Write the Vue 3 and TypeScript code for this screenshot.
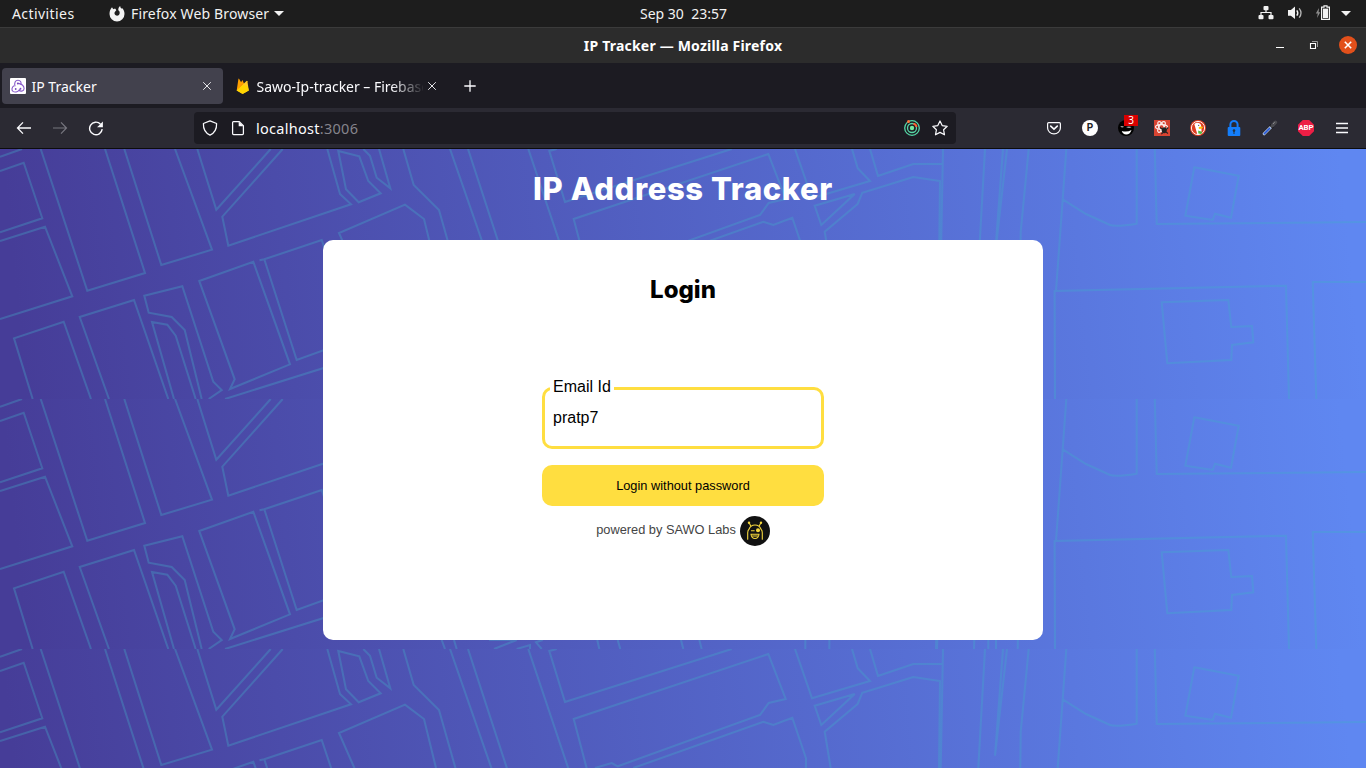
<script setup lang="ts">
import { ref } from 'vue'

const email = ref<string>('pratp7')

const tileHeight = 250
const tiles = [0, 1, 2]

// Street outlines of one background map tile (1366 x 250)
const streets: string[] = [
  'M0 7.7L22 0',
  'M0 22L23.7 13.7 42.3 69.3 0 83.3',
  'M0 92L45 77.7 72.3 147.3 0 170',
  'M40.7 0L87.3 141.7 145 124 105 0',
  'M124.3 0L161.3 116 212 100.7 175 0',
  'M197.3 0L216.3 60.7 270.7 0',
  'M282.7 0L222.3 67.7 228.3 96.7 351 55.3 340 45 327.3 0',
  'M32.7 250L14 189.3 63.7 172.7 91 250',
  'M109 250L79.7 168 134 151 168.3 250',
  'M201.7 250L184.7 181 171.7 168 148.7 163.7 144.3 146.7 182.3 137.3 213.3 232.7 221.7 241 208.7 250',
  'M174 250L152 173 167.3 175.7 175.7 186.7 195.7 250',
  'M199.3 132L253.3 112.7 290 215.3 230 240 234.7 230.3Z',
  'M259.5 111.3L264.3 110.3 321.7 91 355 190 296.7 211 264.3 110.3',
  'M225 250L365 206',
  'M338.3 2L359.3 7.3 368.3 32 380.7 44.3 358.7 53.3 346 40.3Z',
  'M363.3 0L370 6.7 376.7 28.7 390.3 39.3 379 0',
  'M403.3 0L413.7 36 439 61 490 241 516.7 241',
  'M390 200L339 84 405 55.7 424 70 436 119 460 200',
  'M450 0L530 230', 'M468 0L530 190', 'M528.3 0L597 205',
  'M556.7 0L549.3 2 565 53 731.7 0',
  'M600 170L573.7 70 768.3 5 785.7 50 768.7 54 760 66 617.7 117.3 611.7 114 595 119',
  'M633.3 119L763.3 72.7 773.3 76 792.3 68.7 806 109.3 805.3 250',
  'M795 0L812 49.3 870 32 857.7 19.3 852 0',
  'M870 0L878 27 913.3 15 941.7 15',
  'M943 0L940.7 119 937 250',
  'M829.3 250L830.7 119 824.7 82.7 857.7 55 862.3 43.7 913.3 28 940 32 939 119 936 250',
  'M814.7 56.7L854.7 45 821.3 76Z',
  'M985 0L978.3 119 974 250',
  'M1003 0L995 106.7 1007 0',
  'M1028.7 0L1020.7 82.7 1020.3 119 1017.7 250',
  'M988.3 250V236', 'M996 250V236',
  'M441.7 241L445 250', 'M454 241L456.7 250', 'M494 250L516.7 241',
  'M516.7 250L530 246V250', 'M541.7 250L536 243.3 542.7 241',
  'M597.3 241L599.3 250', 'M617.7 241L620.3 250', 'M681 241L683.3 250', 'M699.3 241L701.7 250',
  'M1066.3 0L1062.7 50.3 1056 142',
  'M1062.7 50.3L1086 65 1110 76Q1116 78 1136.7 74.7V0',
  'M1154.8 0L1156.7 75 1366 73',
  'M1194.3 18.3L1238.7 26.7 1231 68.7 1215 64.7 1212.7 71 1185.3 66.7Z',
  'M1055 250L1054.6 142 1286 136.7 1289 250',
  'M1316.3 250L1312.7 133H1366',
  'M1161.7 153.3L1228.3 151 1231.3 178 1252 177 1253.3 193.3 1232 196 1231.3 211 1167.3 214.3Z',
]
</script>

<template>
  <div class="desktop">
    <header class="topbar">
      <span class="activities">Activities</span>
      <span class="app-menu">
        <svg width="16" height="16" viewBox="0 0 16 16">
          <path fill="#f2f2f2" d="M3 1.2 4.3 3.3C5 2.8 5.8 2.7 6.4 2.8L7.3 4.2 6.2 5.4C4.9 6.7 5.4 8.8 7.1 9.5 8.9 10.1 10.7 8.8 10.7 7 10.7 5.7 10.2 4.9 9.3 4.3 9.1 2.4 9.9 1 11.2 0 11.2 1.7 12.1 2.2 12.8 2.7L13 1.9C14.8 3.6 15.5 5.5 15.5 8A7.5 7.5 0 1 1 .5 8C.5 5.3 1.3 3 3 1.2Z" />
        </svg>
        <span class="app-name">Firefox Web Browser</span>
        <svg class="caret" width="10" height="5" viewBox="0 0 10 5"><path fill="#f2f2f2" d="M0 0h10L5 5z" /></svg>
      </span>
      <span class="clock">Sep 30&nbsp; 23:57</span>
      <span class="status">
        <svg class="network" width="16" height="16" viewBox="0 0 16 16">
          <g fill="#f2f2f2"><rect x="5.5" y="1" width="5" height="4.2" rx="1" /><rect x=".5" y="10" width="5" height="4.2" rx="1" /><rect x="10.5" y="10" width="5" height="4.2" rx="1" /></g>
          <path d="M8 4v3.5M3 11V7.5h10V11" fill="none" stroke="#f2f2f2" stroke-width="1.2" />
        </svg>
        <svg class="volume" width="16" height="16" viewBox="0 0 16 16">
          <path fill="#f2f2f2" d="M1 5h2.9L8 1.5v12.6l-4.1-3.4H1z" />
          <path d="M9.8 5.3q2 2.7 0 5.4" fill="none" stroke="#f2f2f2" stroke-width="1.4" />
          <path d="M12.2 3.3q3.6 4.6 0 9.4" fill="none" stroke="#b8b8b8" stroke-width="1.3" />
        </svg>
        <svg class="battery" width="16" height="16" viewBox="0 0 16 16">
          <path fill="#8e8e8e" d="M4 3 .8 8.6h2L2 13l3.3-5.8H3.6z" />
          <path d="M6.6 2.1H9V.8h3v1.3h2.4v12.3H6.6z" fill="none" stroke="#f2f2f2" stroke-width="1.2" />
          <path fill="#f2f2f2" d="M8 3.6h5v9.4H8z" />
        </svg>
        <svg class="menu-caret" width="10" height="5" viewBox="0 0 10 5"><path fill="#f2f2f2" d="M0 0h10L5 5z" /></svg>
      </span>
    </header>

    <div class="titlebar">
      <span class="window-title">IP Tracker — Mozilla Firefox</span>
      <div class="window-buttons">
        <svg width="16" height="18" viewBox="0 0 16 18"><path fill="#fff" d="M4 11h8v1H4z" /></svg>
        <svg width="16" height="18" viewBox="0 0 16 18">
          <path d="M4.5 7.5h5v5h-5z" fill="none" stroke="#fff" stroke-width="1.1" /><path d="M6 5.5h5.5v5.5" fill="none" stroke="#999" />
        </svg>
        <svg width="18" height="18" viewBox="0 0 18 18">
          <circle cx="9" cy="9" r="9" fill="#e2501b" /><path d="m5.8 5.8 6.4 6.4m0-6.4-6.4 6.4" stroke="#fff" stroke-width="1.6" />
        </svg>
      </div>
    </div>

    <div class="tabs">
      <div class="tab active">
        <svg width="16" height="16" viewBox="0 0 16 16">
          <rect width="16" height="16" rx="1" fill="#fff" />
          <g fill="none" stroke="#8759c9" stroke-width="1.1">
            <path d="M5 8.3C4.1 5 5.2 2.2 8 2.2c2.6 0 3.8 2.4 2.7 4.6" />
            <path d="M7.9 5.4c3.6.1 6.2 2.5 6.2 5-.1 2.6-3 3.6-5.6 1.6" />
            <path d="M10.5 10.7c-1.9 3.1-5.2 4.1-7.5 2.7-1.8-1.4-1.2-4.2.9-5.6" />
          </g>
          <circle cx="5.7" cy="11" r=".9" fill="#764abc" /><circle cx="7.8" cy="5.5" r=".9" fill="#764abc" /><circle cx="10.5" cy="10.7" r=".9" fill="#764abc" />
        </svg>
        <span class="tab-label">IP Tracker</span>
        <svg class="tab-close" width="10" height="10" viewBox="0 0 10 10"><path d="m1.2 1.2 7.6 7.6m0-7.6-7.6 7.6" stroke="#e4e4e8" /></svg>
      </div>
      <div class="tab second">
        <svg width="16" height="16" viewBox="0 0 16 16">
          <path fill="#ffa000" d="M1.7 12.5 3.4.9q.3-.7.8 0L6.1 4.2 7.5 2l4 10z" />
          <path fill="#f57c00" d="M1.7 12.5 7.3 6 9 8.8z" />
          <path fill="#ffca28" d="M1.7 12.6 11.5 3q.7-.5.9.3l1.4 9.2-5.4 3.1q-.8.4-1.5 0z" />
          <path fill="#ffd400" d="m1.7 12.6 6-5.8 5 1.6 1.1 4.1-5.4 3.1q-.8.4-1.5 0z" />
        </svg>
        <span class="tab-label fade">Sawo-Ip-tracker – Firebase</span>
        <svg class="tab-close" width="10" height="10" viewBox="0 0 10 10"><path d="m1.2 1.2 7.6 7.6m0-7.6-7.6 7.6" stroke="#e4e4e8" /></svg>
      </div>
      <svg class="new-tab" width="12" height="12" viewBox="0 0 12 12"><path d="M6 .3v11.4M.3 6h11.4" stroke="#fbfbfe" stroke-width="1.3" /></svg>
    </div>

    <div class="toolbar">
      <div class="nav">
        <svg width="16" height="16" viewBox="0 0 16 16"><path d="M15 8H1.7M7 2.4 1.5 8 7 13.6" fill="none" stroke="#fbfbfe" stroke-width="1.3" /></svg>
        <svg width="16" height="16" viewBox="0 0 16 16"><path d="M1 8h13.3M9 2.4 14.5 8 9 13.6" fill="none" stroke="#77767f" stroke-width="1.2" /></svg>
        <svg width="16" height="16" viewBox="0 0 16 16">
          <path d="M14.2 9.2A6.3 6.3 0 1 1 12.4 4" fill="none" stroke="#fbfbfe" stroke-width="1.4" /><path fill="#fbfbfe" d="M14.9 1.4v5.8H9.1z" />
        </svg>
      </div>
      <div class="urlbar">
        <svg width="16" height="16" viewBox="0 0 16 16"><path d="M8 .9 14.6 3.5C14.8 9.5 12.7 13 8 15.1 3.3 13 1.2 9.5 1.4 3.5Z" fill="none" stroke="#fbfbfe" stroke-width="1.25" stroke-linejoin="round" /></svg>
        <svg class="page-icon" width="16" height="16" viewBox="0 0 16 16">
          <path d="M3.5 1.6h5.7l4.2 4.2v7.7q0 1-1 1H3.6q-1 0-1-1v-11q0-.9.9-.9z" fill="none" stroke="#fbfbfe" stroke-width="1.25" /><path d="M8.7 1.5v4.8h4.8z" fill="#fbfbfe" />
        </svg>
        <span class="url">localhost<span class="port">:3006</span></span>
        <svg class="target" width="16" height="16" viewBox="0 0 16 16">
          <g fill="none" stroke="#55d6a6" stroke-width="1.3"><circle cx="8" cy="8" r="7.3" /><circle cx="8" cy="8" r="4.5" /></g>
          <circle cx="8" cy="8" r="2.2" fill="#72eba0" /><circle cx="4.5" cy="1.6" r="1.5" fill="#ff7139" /><path d="M9.5 3.8q2.7.7 3 3" stroke="#ff6030" stroke-width="2" fill="none" />
        </svg>
        <svg width="16" height="16" viewBox="0 0 16 16"><path d="m8 1 2.2 4.6 5 .7-3.6 3.5.9 5L8 12.4l-4.5 2.4.9-5L.8 6.3l5-.7z" fill="none" stroke="#fbfbfe" stroke-width="1.2" stroke-linejoin="round" /></svg>
      </div>
      <div class="extensions">
        <svg width="16" height="16" viewBox="0 0 16 16">
          <path d="M2.7 2.6h10.6q1.1 0 1.1 1.1V8A6.4 5.8 0 0 1 1.6 8V3.7q0-1.1 1.1-1.1z" fill="none" stroke="#fbfbfe" stroke-width="1.2" /><path d="m4.7 6.1 3.3 3 3.3-3" fill="none" stroke="#fbfbfe" stroke-width="1.6" stroke-linecap="round" />
        </svg>
        <span class="p-icon">P</span>
        <span class="badge-holder">
          <svg width="16" height="16" viewBox="0 0 16 16">
            <circle cx="8" cy="8" r="8" fill="#000" /><path d="M2.2 6.6Q4 5.2 6 6.8 4.4 8.2 2.2 6.6zM8 7Q11 5.8 13.5 7q-2 2-5.5 0z" fill="#aaa" /><path d="M3.8 11q5.2 1.6 9.7-1-1.5 4.6-5.3 4.6-3.4-.3-4.4-3.6z" fill="#fff" />
          </svg>
          <b class="badge">3</b>
        </span>
        <svg width="16" height="16" viewBox="0 0 16 16">
          <path fill="#d84432" d="M0 0h16v16H0z" />
          <g fill="none" stroke="#fbeeec" stroke-width="1.2"><ellipse cx="7.5" cy="7" rx="6" ry="2.4" /><ellipse cx="7.5" cy="7" rx="6" ry="2.4" transform="rotate(60 7.5 7)" /><ellipse cx="7.5" cy="7" rx="6" ry="2.4" transform="rotate(-60 7.5 7)" /></g>
          <ellipse cx="10.2" cy="10.2" rx="2.5" ry="3" fill="#222" /><path d="m6 7.5 8 6m.3-6-7 6.6" stroke="#222" stroke-width="1.1" />
        </svg>
        <svg width="16" height="16" viewBox="0 0 16 16">
          <circle cx="8" cy="8" r="8" fill="#de3f22" /><circle cx="8" cy="8" r="6.6" fill="none" stroke="#fff" stroke-width=".9" />
          <path d="M4.3 3.9Q6.5 2.3 9 3q2.2.9 2.3 3.6l.3 4.6-1.6 3H7.3z" fill="#fff" /><path d="M8.8 7q3.2-.9 4.4.3-1.4 2-4.4 1.5z" fill="#fdc20a" /><path d="m8.2 10.6 3.8 1.2-.5 2.2-3.2-.6z" fill="#4cba3c" /><circle cx="8.7" cy="5.3" r=".6" fill="#335" />
        </svg>
        <svg width="16" height="16" viewBox="0 0 16 16">
          <rect x="1.7" y="7" width="12.6" height="9" rx="1" fill="#147efb" /><path d="M4.4 7.5V4.6a3.6 3.6 0 0 1 7.2 0v2.9" fill="none" stroke="#147efb" stroke-width="2" /><circle cx="8" cy="10.6" r="1.3" fill="#234" /><path d="M7.5 11h1v3h-1z" fill="#234" />
        </svg>
        <svg width="16" height="16" viewBox="0 0 16 16">
          <path d="m2.2 13.8 7.3-7.3" stroke="#b9cbe2" stroke-width="3" stroke-linecap="round" /><path d="m2.4 13.6 5.2-5.2" stroke="#2859d8" stroke-width="1.6" stroke-linecap="round" /><path d="m8 4.8 3.2 3.2" stroke="#17171c" stroke-width="2" /><path d="m10.4 5.6 3-3.3" stroke="#4b4b50" stroke-width="3.6" stroke-linecap="round" /><path d="m11 4 1.6-1.8" stroke="#8c8c90" />
        </svg>
        <span class="abp">ABP</span>
        <svg width="16" height="16" viewBox="0 0 16 16"><path d="M2 3.5h12M2 8h12M2 12.5h12" stroke="#fbfbfe" stroke-width="1.3" /></svg>
      </div>
    </div>

    <main class="page">
      <svg class="map" width="1366" height="619" viewBox="0 0 1366 619">
        <defs>
          <linearGradient id="sky" gradientUnits="userSpaceOnUse" x1="20" y1="190" x2="1346" y2="60">
            <stop offset="0" stop-color="#463d98" /><stop offset="1" stop-color="#5f87f1" />
          </linearGradient>
          <linearGradient id="road" gradientUnits="userSpaceOnUse" x1="0" y1="0" x2="1366" y2="0">
            <stop offset="0" stop-color="#4562a8" /><stop offset="1" stop-color="#5494e4" />
          </linearGradient>
          <clipPath id="tile"><path :d="`M0 0H1366V${tileHeight}H0Z`" /></clipPath>
        </defs>
        <g v-for="t in tiles" :key="t" :transform="`translate(0 ${t * tileHeight})`" clip-path="url(#tile)">
          <rect width="1366" :height="tileHeight" fill="url(#sky)" />
          <path :d="streets.join('')" class="street" stroke="url(#road)" />
        </g>
      </svg>
      <h1 class="heading">IP Address Tracker</h1>
      <section class="card">
        <h2 class="login">Login</h2>
        <form class="form" @submit.prevent>
          <fieldset class="field">
            <legend>Email Id</legend>
            <input v-model="email" type="text" aria-label="Email Id" />
          </fieldset>
          <button class="submit" type="submit">Login without password</button>
          <div class="powered">
            <span>powered by SAWO Labs</span>
            <svg width="30" height="30" viewBox="0 0 30 30">
              <circle cx="15" cy="15" r="15" fill="#111" />
              <g fill="none" stroke="#f5d63d" stroke-width="1.1" stroke-linecap="round">
                <path d="M7.7 23.3v-6.5M22.3 23.3v-6.5M9 13.2q1.5-4.2 6-4.2t6 4.2q1.3 1.4 1.3 3.6M9 13.2q-1.3 1.4-1.3 3.6" />
                <path d="M10.8 10 9.2 7M19.2 10 20.8 7" /><path d="M11.4 14.8h2.8M11 18.3h8q-.5 4.2-4 4.2t-4-4.2z" /><path d="M12.4 20h5.2" />
              </g>
              <circle cx="18" cy="14.3" r="2" fill="#f5d63d" /><circle cx="9" cy="6.8" r="1.2" fill="#f5d63d" /><circle cx="21" cy="6.8" r="1.2" fill="#f5d63d" />
            </svg>
          </div>
        </form>
      </section>
    </main>
  </div>
</template>

<style>
body { margin: 0; overflow: hidden; }
</style>

<style scoped>
* { box-sizing: border-box; }
svg { display: block; flex: none; }
.desktop { width: 1366px; height: 768px; display: flex; flex-direction: column; overflow: hidden; font-family: "Noto Sans", "Open Sans", sans-serif; font-size: 14px; color: #f2f2f2; }
.topbar { height: 27px; flex: none; display: flex; align-items: center; background: #1d1d1d; padding-left: 12px; line-height: 27px; }
.activities { width: 97px; letter-spacing: 0.42px; }
.app-menu { width: 531px; display: flex; align-items: center; }
.app-name { margin-left: 6px; letter-spacing: 0.15px; }
.caret { margin-left: 5px; }
.clock { width: 88px; white-space: nowrap; }
.status { margin-left: auto; display: flex; align-items: center; padding-right: 15px; }
.network { margin-top: -1px; }
.volume { margin-left: 13px; margin-top: -1px; }
.battery { margin-left: 12px; margin-top: -1px; }
.menu-caret { margin-left: 10px; }
.titlebar { height: 36px; flex: none; background: #2c2c2c; border-top: 1px solid #3b3b3b; display: grid; grid-template-columns: 1fr auto 1fr; align-items: center; }
.window-title { grid-column: 2; font-weight: 700; letter-spacing: 0.2px; color: #fff; }
.window-buttons { display: flex; justify-content: flex-end; gap: 18px; padding-right: 9px; }
.window-buttons svg { margin-top: -1px; }
.window-buttons svg:last-child { margin-left: -1px; }
.tabs { height: 45px; flex: none; background: #1c1b22; display: flex; align-items: center; padding: 1px 0 0 2px; }
.tab { height: 36px; display: flex; align-items: center; border-radius: 4px; }
.active { width: 221px; background: #42414d; padding: 0 11px 0 8px; }
.second { width: 225px; padding: 0 11px 0 12px; }
.tab-label { margin-left: 5.5px; color: #fbfbfe; white-space: nowrap; }
.fade { flex: none; width: 166px; letter-spacing: -0.03px; mask-image: linear-gradient(90deg, #000 134px, transparent 168px); }
.tab-close { margin-left: auto; }
.second .tab-close { margin-left: 4.5px; }
.new-tab { margin-left: 16px; }
.toolbar { height: 41px; flex: none; background: #2b2a33; border-bottom: 1px solid #0c0c0d; padding: 0 16px; display: flex; align-items: center; }
.nav, .extensions { display: flex; align-items: center; gap: 20px; }
.urlbar { margin-left: 90px; width: 762px; height: 32px; border-radius: 4px; background: #1c1b22; display: flex; align-items: center; padding: 0 8px; }
.page-icon { margin-left: 12px; }
.url { margin-left: 10px; font-size: 14.5px; letter-spacing: 0.28px; color: #fbfbfe; }
.port { color: #85848c; }
.target { margin: 0 12px 0 auto; }
.extensions { margin-left: auto; }
.p-icon { width: 16px; height: 16px; border-radius: 8px; background: #fff; color: #222; font: 700 10px/16px Roboto, sans-serif; text-align: center; }
.badge-holder { position: relative; }
.badge { position: absolute; left: 6px; top: -5px; width: 14px; height: 11px; background: #d90000; color: #fff; font: 400 10px/11px "Noto Sans", sans-serif; text-align: center; }
.abp { width: 16px; height: 16px; background: #ed1e45; color: #fff; font: 700 7.8px/16px Roboto, sans-serif; text-align: center; clip-path: polygon(30% 0, 70% 0, 100% 30%, 100% 70%, 70% 100%, 30% 100%, 0 70%, 0 30%); }
.page { position: relative; height: 619px; flex: none; display: flex; flex-direction: column; align-items: center; }
.map { position: absolute; inset: 0; }
.street { fill: none; stroke-width: 2; }
.heading, .card { position: relative; }
.heading { margin: 20px 0 0; height: 38px; color: #fff; font: 800 31px/40px Inter, Roboto, sans-serif; letter-spacing: 0.6px; white-space: nowrap; }
.card { margin-top: 33px; width: 720px; height: 400px; border-radius: 10px; background: #fff; display: flex; flex-direction: column; align-items: center; font-family: "Liberation Sans", Arial, sans-serif; color: #000; }
.login { margin: 35px 0 0; font: 800 24px/30px Inter, Roboto, sans-serif; }
.form { width: 282px; margin-top: 73px; }
.field { margin: 0; height: 71px; border: 3px solid #ffde40; border-radius: 10px; padding: 0 5px; font-size: 16px; }
.field legend { padding: 0 3px; line-height: 18px; height: 20px; }
.field input { display: block; width: 100%; border: 0; outline: 0; padding: 0 3px; margin-top: 9px; height: 22px; font: 16px "Liberation Sans", Arial, sans-serif; color: #000; background: transparent; }
.submit { display: block; width: 282px; height: 41px; margin-top: 16px; border: 0; border-radius: 10px; background: #ffde40; color: #000; font: 12.8px "Liberation Sans", Arial, sans-serif; }
.powered { display: flex; justify-content: center; align-items: center; gap: 4px; margin-top: 10px; font-size: 12.8px; color: #444; }
.powered span { margin-top: -3px; }
</style>
